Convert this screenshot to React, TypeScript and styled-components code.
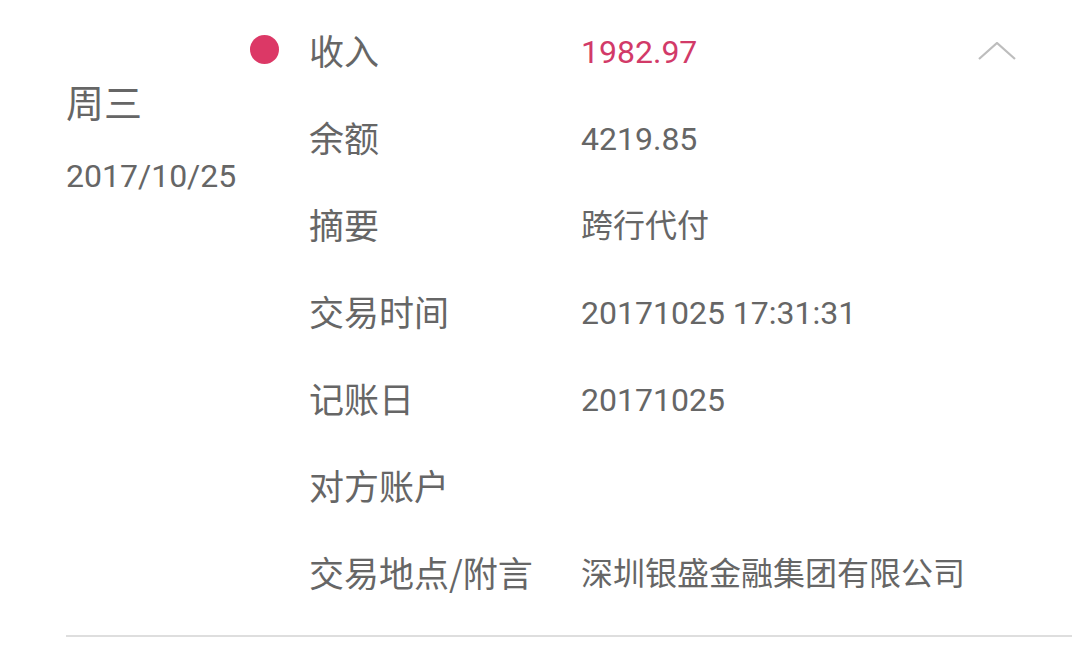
import React from "react";
import styled, { createGlobalStyle } from "styled-components";

const Global = createGlobalStyle`
  html, body { margin: 0; padding: 0; background: #ffffff; }
  body { font-family: Roboto, "Noto Sans CJK SC", sans-serif; color: #666666; }
`;

const Page = styled.div`
  width: 1072px;
  height: 645px;
  overflow: hidden;
  background: #ffffff;
`;

const Entry = styled.div`
  display: flex;
  margin-left: 66px;
  padding-top: 6px;
  padding-bottom: 20px;
  border-bottom: 2px solid #dedede;
`;

const DateCol = styled.div`
  width: 184px;
  flex: none;
  display: flex;
  flex-direction: column;
  padding-top: 75px;
`;

const Weekday = styled.div`
  font-family: "Noto Sans CJK SC", sans-serif;
  font-size: 38px;
  line-height: 40px;
  color: #666666;
`;

const DateText = styled.div`
  font-family: Roboto, sans-serif;
  font-size: 32px;
  line-height: 40px;
  margin-top: 35px;
  color: #666666;
`;

const Details = styled.div`
  flex: 1;
  display: flex;
  flex-direction: column;
`;

const Row = styled.div`
  display: flex;
  align-items: center;
  height: 87px;
`;

const DotSlot = styled.div`
  width: 59px;
  flex: none;
  display: flex;
  align-items: center;
`;

const Dot = styled.span`
  width: 29px;
  height: 29px;
  border-radius: 50%;
  background: #dc3866;
`;

const Label = styled.div`
  width: 272px;
  flex: none;
  font-family: "Noto Sans CJK SC", sans-serif;
  font-size: 35px;
  line-height: 44px;
  color: #666666;
  white-space: nowrap;
`;

const Value = styled.div<{ $accent?: boolean }>`
  flex: 1;
  font-family: Roboto, "Noto Sans CJK SC", sans-serif;
  font-size: 32px;
  line-height: 44px;
  padding-top: 5px;
  color: ${(p) => (p.$accent ? "#d23a68" : "#666666")};
  white-space: nowrap;
`;

const Toggle = styled.div`
  width: 40px;
  margin-right: 55px;
  flex: none;
  display: flex;
  align-items: center;
  justify-content: center;
  align-self: flex-start;
  padding-top: 36px;
`;

const Chevron = () => (
  <svg width="40" height="20" viewBox="0 0 40 20">
    <polyline points="2,17 20,1 38,17" fill="none" stroke="#bdbdbd" strokeWidth="2.2" />
  </svg>
);

type Item = { label: string; value: string };

const items: Item[] = [
  { label: "余额", value: "4219.85" },
  { label: "摘要", value: "跨行代付" },
  { label: "交易时间", value: "20171025 17:31:31" },
  { label: "记账日", value: "20171025" },
  { label: "对方账户", value: "" },
  { label: "交易地点/附言", value: "深圳银盛金融集团有限公司" },
];

export default function App() {
  return (
    <Page>
      <Global />
      <Entry>
        <DateCol>
          <Weekday>周三</Weekday>
          <DateText>2017/10/25</DateText>
        </DateCol>
        <Details>
          <Row>
            <DotSlot>
              <Dot />
            </DotSlot>
            <Label>收入</Label>
            <Value $accent>1982.97</Value>
            <Toggle>
              <Chevron />
            </Toggle>
          </Row>
          {items.map((it) => (
            <Row key={it.label}>
              <DotSlot />
              <Label>{it.label}</Label>
              <Value>{it.value}</Value>
            </Row>
          ))}
        </Details>
      </Entry>
    </Page>
  );
}
